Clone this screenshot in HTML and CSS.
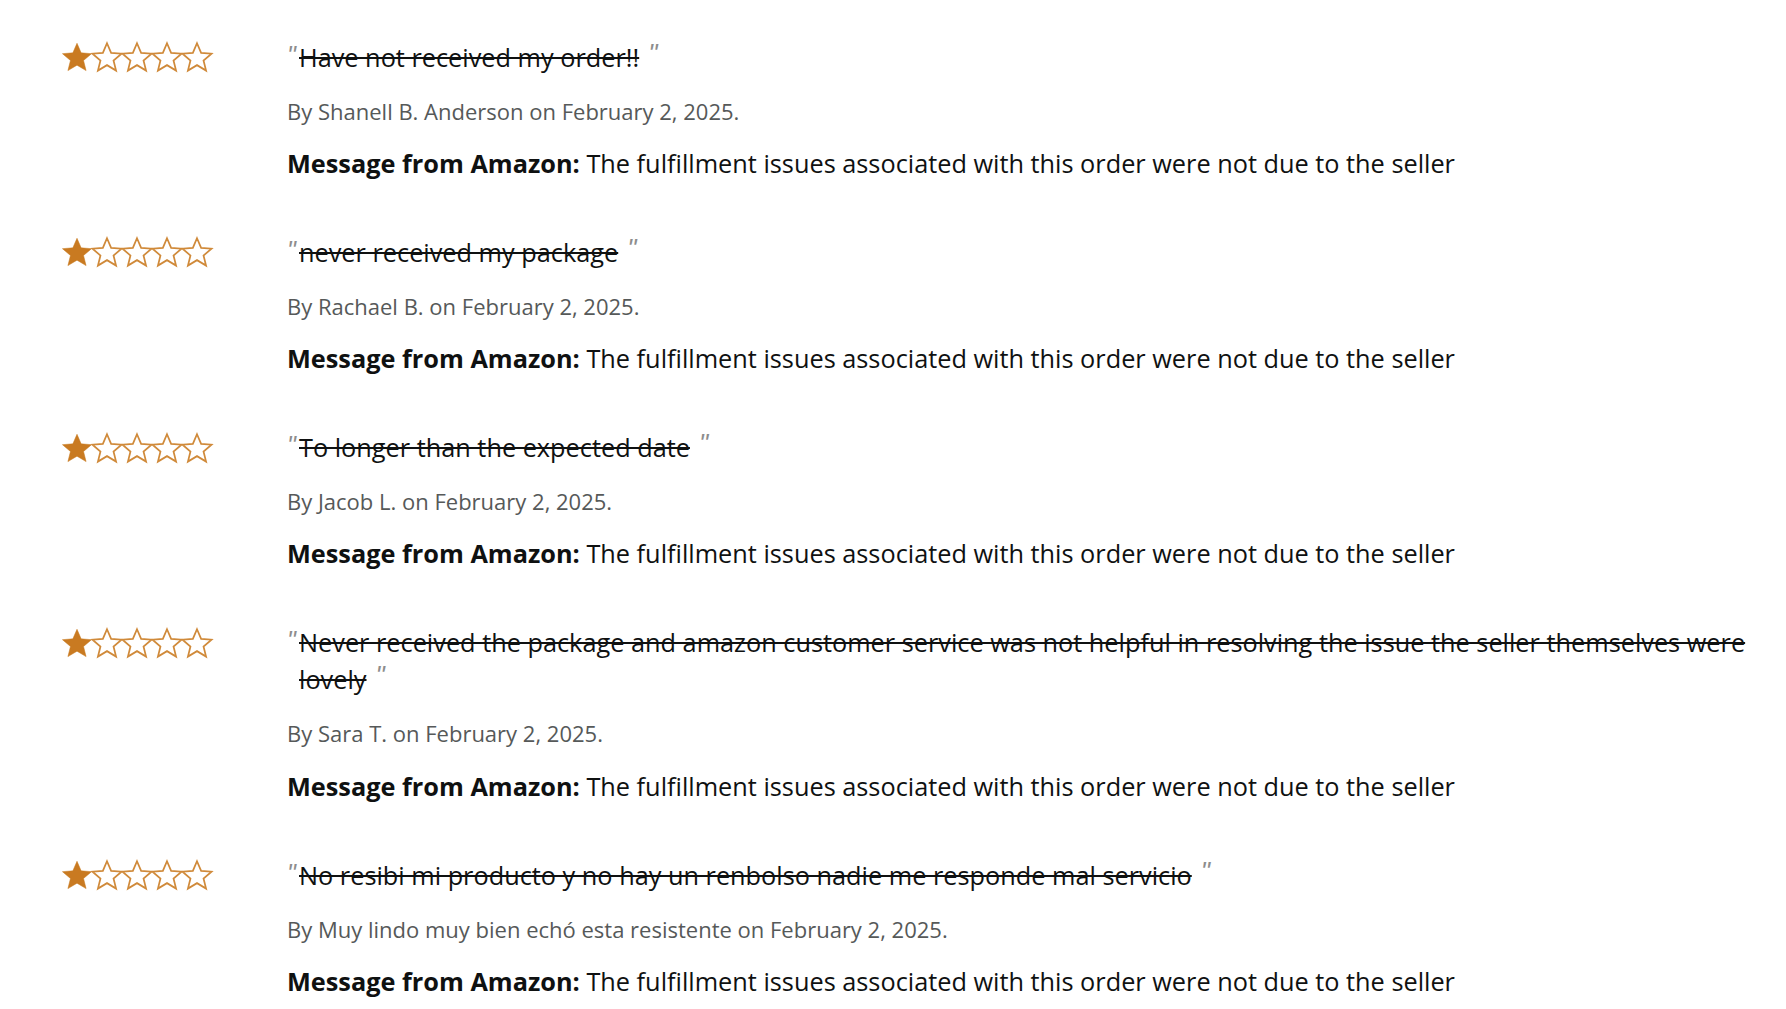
FILE: index.html
```html
<!DOCTYPE html>
<html lang="en">
<head>
<meta charset="utf-8">
<title>Seller feedback</title>
<link rel="stylesheet" href="styles.css">
</head>
<body>
<div class="feedback-list">

  <div class="review">
    <div class="stars" aria-label="1 out of 5 stars">
      <svg class="star" viewBox="1 1.4 22 21"><path class="full" d="M12 1.6l3.1 7.2 7.8.6-6 5.1 1.9 7.6L12 18l-6.8 4.1 1.9-7.6-6-5.1 7.8-.6z"/></svg>
      <svg class="star" viewBox="1 1.4 22 21"><path class="empty" d="M12 1.6l3.1 7.2 7.8.6-6 5.1 1.9 7.6L12 18l-6.8 4.1 1.9-7.6-6-5.1 7.8-.6z"/></svg>
      <svg class="star" viewBox="1 1.4 22 21"><path class="empty" d="M12 1.6l3.1 7.2 7.8.6-6 5.1 1.9 7.6L12 18l-6.8 4.1 1.9-7.6-6-5.1 7.8-.6z"/></svg>
      <svg class="star" viewBox="1 1.4 22 21"><path class="empty" d="M12 1.6l3.1 7.2 7.8.6-6 5.1 1.9 7.6L12 18l-6.8 4.1 1.9-7.6-6-5.1 7.8-.6z"/></svg>
      <svg class="star" viewBox="1 1.4 22 21"><path class="empty" d="M12 1.6l3.1 7.2 7.8.6-6 5.1 1.9 7.6L12 18l-6.8 4.1 1.9-7.6-6-5.1 7.8-.6z"/></svg>
    </div>
    <div class="content">
      <div class="title"><span class="q">"</span><span class="ttext"><s>Have not received my order!!<span class="cq">"</span></s></span></div>
      <div class="byline">By Shanell B. Anderson on February 2, 2025.</div>
      <div class="message"><b>Message from Amazon:</b> The fulfillment issues associated with this order were not due to the seller</div>
    </div>
  </div>

  <div class="review">
    <div class="stars" aria-label="1 out of 5 stars">
      <svg class="star" viewBox="1 1.4 22 21"><path class="full" d="M12 1.6l3.1 7.2 7.8.6-6 5.1 1.9 7.6L12 18l-6.8 4.1 1.9-7.6-6-5.1 7.8-.6z"/></svg>
      <svg class="star" viewBox="1 1.4 22 21"><path class="empty" d="M12 1.6l3.1 7.2 7.8.6-6 5.1 1.9 7.6L12 18l-6.8 4.1 1.9-7.6-6-5.1 7.8-.6z"/></svg>
      <svg class="star" viewBox="1 1.4 22 21"><path class="empty" d="M12 1.6l3.1 7.2 7.8.6-6 5.1 1.9 7.6L12 18l-6.8 4.1 1.9-7.6-6-5.1 7.8-.6z"/></svg>
      <svg class="star" viewBox="1 1.4 22 21"><path class="empty" d="M12 1.6l3.1 7.2 7.8.6-6 5.1 1.9 7.6L12 18l-6.8 4.1 1.9-7.6-6-5.1 7.8-.6z"/></svg>
      <svg class="star" viewBox="1 1.4 22 21"><path class="empty" d="M12 1.6l3.1 7.2 7.8.6-6 5.1 1.9 7.6L12 18l-6.8 4.1 1.9-7.6-6-5.1 7.8-.6z"/></svg>
    </div>
    <div class="content">
      <div class="title"><span class="q">"</span><span class="ttext"><s>never received my package<span class="cq">"</span></s></span></div>
      <div class="byline">By Rachael B. on February 2, 2025.</div>
      <div class="message"><b>Message from Amazon:</b> The fulfillment issues associated with this order were not due to the seller</div>
    </div>
  </div>

  <div class="review">
    <div class="stars" aria-label="1 out of 5 stars">
      <svg class="star" viewBox="1 1.4 22 21"><path class="full" d="M12 1.6l3.1 7.2 7.8.6-6 5.1 1.9 7.6L12 18l-6.8 4.1 1.9-7.6-6-5.1 7.8-.6z"/></svg>
      <svg class="star" viewBox="1 1.4 22 21"><path class="empty" d="M12 1.6l3.1 7.2 7.8.6-6 5.1 1.9 7.6L12 18l-6.8 4.1 1.9-7.6-6-5.1 7.8-.6z"/></svg>
      <svg class="star" viewBox="1 1.4 22 21"><path class="empty" d="M12 1.6l3.1 7.2 7.8.6-6 5.1 1.9 7.6L12 18l-6.8 4.1 1.9-7.6-6-5.1 7.8-.6z"/></svg>
      <svg class="star" viewBox="1 1.4 22 21"><path class="empty" d="M12 1.6l3.1 7.2 7.8.6-6 5.1 1.9 7.6L12 18l-6.8 4.1 1.9-7.6-6-5.1 7.8-.6z"/></svg>
      <svg class="star" viewBox="1 1.4 22 21"><path class="empty" d="M12 1.6l3.1 7.2 7.8.6-6 5.1 1.9 7.6L12 18l-6.8 4.1 1.9-7.6-6-5.1 7.8-.6z"/></svg>
    </div>
    <div class="content">
      <div class="title"><span class="q">"</span><span class="ttext"><s>To longer than the expected date<span class="cq">"</span></s></span></div>
      <div class="byline">By Jacob L. on February 2, 2025.</div>
      <div class="message"><b>Message from Amazon:</b> The fulfillment issues associated with this order were not due to the seller</div>
    </div>
  </div>

  <div class="review">
    <div class="stars" aria-label="1 out of 5 stars">
      <svg class="star" viewBox="1 1.4 22 21"><path class="full" d="M12 1.6l3.1 7.2 7.8.6-6 5.1 1.9 7.6L12 18l-6.8 4.1 1.9-7.6-6-5.1 7.8-.6z"/></svg>
      <svg class="star" viewBox="1 1.4 22 21"><path class="empty" d="M12 1.6l3.1 7.2 7.8.6-6 5.1 1.9 7.6L12 18l-6.8 4.1 1.9-7.6-6-5.1 7.8-.6z"/></svg>
      <svg class="star" viewBox="1 1.4 22 21"><path class="empty" d="M12 1.6l3.1 7.2 7.8.6-6 5.1 1.9 7.6L12 18l-6.8 4.1 1.9-7.6-6-5.1 7.8-.6z"/></svg>
      <svg class="star" viewBox="1 1.4 22 21"><path class="empty" d="M12 1.6l3.1 7.2 7.8.6-6 5.1 1.9 7.6L12 18l-6.8 4.1 1.9-7.6-6-5.1 7.8-.6z"/></svg>
      <svg class="star" viewBox="1 1.4 22 21"><path class="empty" d="M12 1.6l3.1 7.2 7.8.6-6 5.1 1.9 7.6L12 18l-6.8 4.1 1.9-7.6-6-5.1 7.8-.6z"/></svg>
    </div>
    <div class="content">
      <div class="title"><span class="q">"</span><span class="ttext"><s>Never received the package and amazon customer service was not helpful in resolving the issue the seller themselves were lovely<span class="cq">"</span></s></span></div>
      <div class="byline">By Sara T. on February 2, 2025.</div>
      <div class="message"><b>Message from Amazon:</b> The fulfillment issues associated with this order were not due to the seller</div>
    </div>
  </div>

  <div class="review">
    <div class="stars" aria-label="1 out of 5 stars">
      <svg class="star" viewBox="1 1.4 22 21"><path class="full" d="M12 1.6l3.1 7.2 7.8.6-6 5.1 1.9 7.6L12 18l-6.8 4.1 1.9-7.6-6-5.1 7.8-.6z"/></svg>
      <svg class="star" viewBox="1 1.4 22 21"><path class="empty" d="M12 1.6l3.1 7.2 7.8.6-6 5.1 1.9 7.6L12 18l-6.8 4.1 1.9-7.6-6-5.1 7.8-.6z"/></svg>
      <svg class="star" viewBox="1 1.4 22 21"><path class="empty" d="M12 1.6l3.1 7.2 7.8.6-6 5.1 1.9 7.6L12 18l-6.8 4.1 1.9-7.6-6-5.1 7.8-.6z"/></svg>
      <svg class="star" viewBox="1 1.4 22 21"><path class="empty" d="M12 1.6l3.1 7.2 7.8.6-6 5.1 1.9 7.6L12 18l-6.8 4.1 1.9-7.6-6-5.1 7.8-.6z"/></svg>
      <svg class="star" viewBox="1 1.4 22 21"><path class="empty" d="M12 1.6l3.1 7.2 7.8.6-6 5.1 1.9 7.6L12 18l-6.8 4.1 1.9-7.6-6-5.1 7.8-.6z"/></svg>
    </div>
    <div class="content">
      <div class="title"><span class="q">"</span><span class="ttext"><s>No resibi mi producto y no hay un renbolso nadie me responde mal servicio<span class="cq">"</span></s></span></div>
      <div class="byline">By Muy lindo muy bien echó esta resistente on February 2, 2025.</div>
      <div class="message"><b>Message from Amazon:</b> The fulfillment issues associated with this order were not due to the seller</div>
    </div>
  </div>

</div>
</body>
</html>
```

FILE: styles.css
```css
html, body {
  margin: 0;
  padding: 0;
  background: #ffffff;
}

body {
  font-family: "Open Sans", "Noto Sans", "Liberation Sans", sans-serif;
  color: #0f1111;
}

.feedback-list {
  display: flex;
  flex-direction: column;
  gap: 53px;
  padding: 38.5px 10px 0 62px;
}

.review {
  display: flex;
  align-items: flex-start;
}

.stars {
  flex: none;
  width: 225px;
  height: 37px;
  display: flex;
  align-items: center;
  gap: 0;
}

.star {
  width: 30px;
  height: 28px;
  display: block;
  overflow: visible;
}

.star .full {
  fill: #c97a21;
  stroke: #c97a21;
  stroke-width: 0.4;
  stroke-linejoin: miter;
}

.star .empty {
  fill: #ffffff;
  stroke: #d08a3a;
  stroke-width: 1.3;
  stroke-linejoin: miter;
}

.content {
  flex: 1;
  min-width: 0;
}

.title {
  display: flex;
  font-size: 25.3px;
  line-height: 37px;
  color: #0f1111;
}

.title s {
  text-decoration-thickness: 2px;
  text-decoration-color: #0f1111;
}

.q,
.cq {
  color: #8d8d8d;
  font-style: italic;
  font-family: "Liberation Sans", sans-serif;
}

.q {
  flex: none;
  width: 12px;
  font-size: 25px;
  line-height: 20px;
  align-self: flex-start;
  margin-top: 6px;
}

.cq {
  display: inline-block;
  font-size: 26px;
  line-height: 20px;
  vertical-align: 5px;
  margin-left: 9px;
}

.byline {
  margin-top: 19px;
  font-size: 22px;
  line-height: 33px;
  color: #565959;
}

.message {
  margin-top: 18.3px;
  font-size: 25.3px;
  line-height: 35px;
  color: #0f1111;
}

.message b {
  font-weight: 700;
}
```
